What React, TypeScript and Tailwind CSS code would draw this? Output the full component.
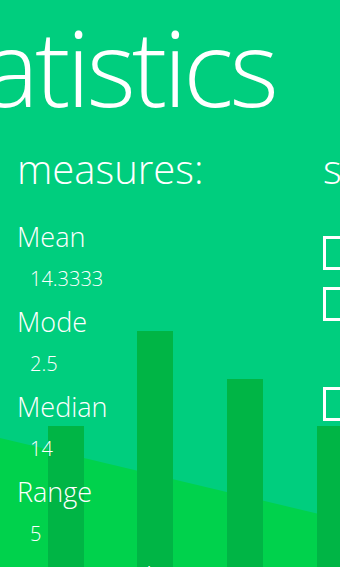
import React from "react";

const font = { fontFamily: '"Open Sans", "Noto Sans", sans-serif' };

function Measure({ label, value }: { label: string; value: string }) {
  return (
    <div className="flex flex-col h-[85px]">
      <div className="text-[27px] leading-none font-[350] whitespace-nowrap">{label}</div>
      <div className="text-[20px] leading-none font-[350] mt-[19px] ml-[13px] whitespace-nowrap">{value}</div>
    </div>
  );
}

function Box() {
  return <div className="w-[34px] h-[34px] border-[3px] border-white shrink-0" />;
}

export default function App() {
  return (
    <div
      className="relative w-[340px] h-[567px] overflow-hidden bg-[#00CE7E] text-white"
      style={font}
    >
      <svg className="absolute inset-0" width="340" height="567" viewBox="0 0 340 567">
        <polygon points="0,438 340,519 340,567 0,567" fill="#00D24C" />
        <rect x="48" y="426" width="36" height="200" fill="#00B545" />
        <rect x="137" y="331" width="36" height="300" fill="#00B545" />
        <rect x="227" y="379" width="36" height="300" fill="#00B545" />
        <rect x="317" y="426" width="36" height="200" fill="#00B545" />
      </svg>
      <div className="relative flex flex-col">
        <div className="mt-[13px] ml-[-94px] text-[106px] leading-none font-light tracking-[-4px] whitespace-nowrap">
          statistics
        </div>
        <div className="flex mt-[30px]">
          <div className="w-[323px] shrink-0 pl-[17px] flex flex-col">
            <div className="text-[40px] leading-none font-light whitespace-nowrap">measures:</div>
            <div className="flex flex-col mt-[34px]">
              <Measure label="Mean" value="14.3333" />
              <Measure label="Mode" value="2.5" />
              <Measure label="Median" value="14" />
              <Measure label="Range" value="5" />
              <Measure label="Interquartile Range" value="4" />
            </div>
          </div>
          <div className="shrink-0 flex flex-col">
            <div className="text-[40px] leading-none font-light whitespace-nowrap">settings:</div>
            <div className="flex flex-col mt-[47px]">
              <div className="flex gap-3 h-[51px] items-start">
                <Box />
                <span className="text-[22px] font-normal">sample</span>
              </div>
              <div className="flex gap-3 h-[100px] items-start">
                <Box />
                <span className="text-[22px] font-normal">population</span>
              </div>
              <div className="flex gap-3 items-start">
                <Box />
                <span className="text-[22px] font-normal">rounded</span>
              </div>
            </div>
          </div>
        </div>
      </div>
    </div>
  );
}
